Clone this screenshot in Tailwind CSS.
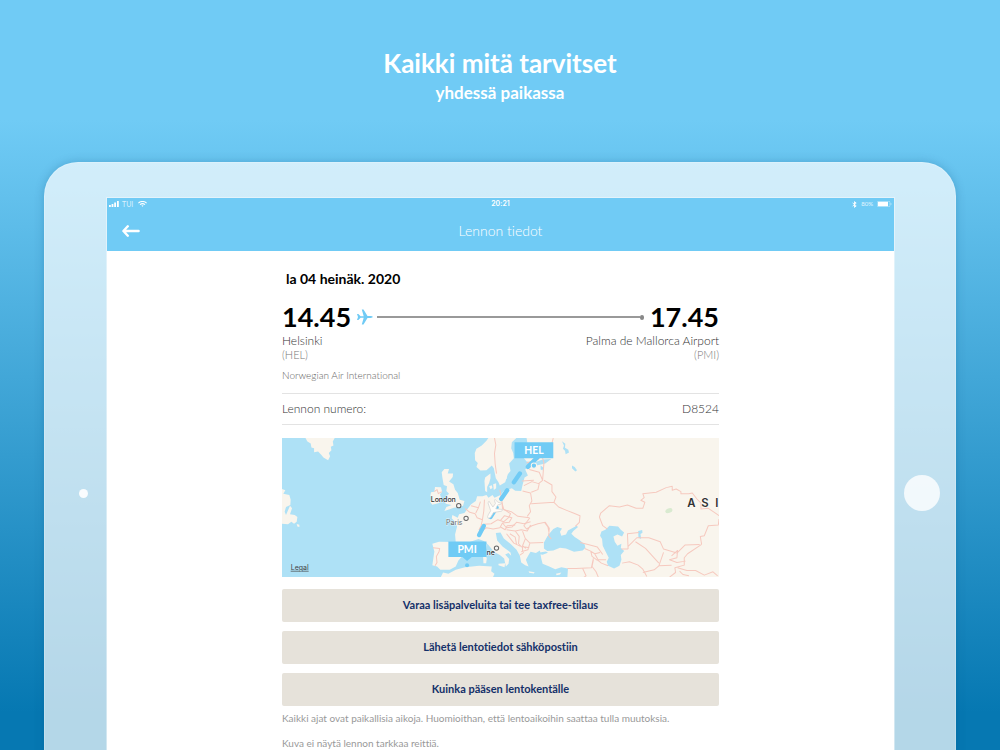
<!DOCTYPE html>
<html lang="fi">
<head>
<meta charset="utf-8">
<meta name="viewport" content="width=device-width, initial-scale=1">
<title>Lennon tiedot</title>
<script src="https://cdn.jsdelivr.net/npm/@tailwindcss/browser@4"></script>
</head>
<body class="font-['Lato','Noto_Sans',sans-serif] [font-variant-ligatures:none]">
<main class="flex h-screen flex-col overflow-hidden bg-linear-to-b/srgb from-[#70cbf5] from-16% to-[#0678b2] to-95%">
  <header class="flex h-[162px] shrink-0 flex-col items-center pt-[47px] font-bold text-white">
    <h1 class="text-[26px] leading-8">Kaikki mitä tarvitset</h1>
    <p class="text-[17px] leading-7">yhdessä paikassa</p>
  </header>

  <section class="mx-11 flex shrink-0 items-center rounded-[34px] border border-white/20 bg-white/70 py-[34px] shadow-[0_0_10px_rgba(0,70,120,0.25)]">
    <div class="flex w-[61px] shrink-0 justify-center pl-4"><span class="size-[9px] rounded-full bg-white/90"></span></div>

    <div class="min-h-[592px] min-w-0 grow border border-white/40 bg-white bg-clip-padding">
      <div class="bg-[#70cbf5] text-white">
        <div class="grid h-3 grid-cols-3 items-center px-[2px] text-[7px] leading-[10px]">
          <div class="flex items-center gap-[3px] text-white/75">
            <svg class="h-[6px] w-[10px]" viewBox="0 0 10 6" fill="#fff"><path d="M0 4h1.8v2H0zM2.6 3h1.8v3H2.6zM5.2 1.6H7V6H5.2zM8 0h1.8v6H8z"/></svg>
            <span>TUI</span>
            <svg class="ml-[2px] h-[6px] w-[9px]" viewBox="0 0 9 6" fill="none" stroke="#fff" stroke-width="1.1"><path d="M.4 2.1a6 6 0 0 1 8.2 0M2 3.7a3.7 3.7 0 0 1 5 0"/><path d="M3.5 4.8a1.5 1.5 0 0 1 2 0l-1 1z" fill="#fff" stroke="none"/></svg>
          </div>
          <span class="text-center font-['Inter',sans-serif] font-semibold">20:21</span>
          <div class="flex items-center justify-end gap-1 text-[6px] text-white/80">
            <svg class="h-[7px] w-[5px]" viewBox="0 0 5 7" fill="none" stroke="#fff" stroke-width=".9"><path d="M.6 1.9l3.6 3L2.5 6.4V.6l1.7 1.5-3.6 3"/></svg>
            <span>80%</span>
            <svg class="h-[6px] w-[15px]" viewBox="0 0 15 6"><rect x=".3" y=".3" width="12.6" height="5.4" rx="1" fill="none" stroke="#fff" stroke-opacity=".6" stroke-width=".6"/><rect x="1" y=".8" width="10" height="4.4" fill="#fff"/><path d="M13.6 2v2q1-.4 1-1t-1-1" fill="#fff" fill-opacity=".6"/></svg>
          </div>
        </div>
        <div class="grid h-[41px] grid-cols-[40px_1fr_40px] items-center px-3">
          <button type="button" aria-label="Takaisin" class="flex pl-[3px]">
            <svg class="h-3 w-[18px]" viewBox="0 0 18 12" fill="none" stroke="#fff" stroke-width="2.4" stroke-linecap="round" stroke-linejoin="round"><path d="M16.6 6H1.6M5.8 1.3L1.4 6l4.4 4.7"/></svg>
          </button>
          <h2 class="text-center text-[14px] leading-5 font-light">Lennon tiedot</h2>
        </div>
      </div>

      <div class="mx-auto max-w-[437px] pt-[18px] text-[12px] font-light text-[#333]">
        <p class="pl-1 text-[14px] leading-5 font-bold text-black">la 04 heinäk. 2020</p>
        <div class="mt-3 flex items-center text-[27px] leading-8 font-bold text-black">
          <span>14.45</span>
          <svg class="mr-1 ml-[6px] h-4 w-4 shrink-0" viewBox="0 0 16 16" fill="#70cbf5"><path d="M0 4.9h1.4l2.2 2.3h3.1L4.8.4h1.7l4 6.7h3.1q2.2.2 2.2.9t-2.2.9h-3.1l-4 6.7H4.8l1.9-6.8H3.6l-2.2 2.3H0L1 8z"/></svg>
          <span class="h-[2px] grow bg-[#999]"></span>
          <span class="mr-[6px] h-[5px] w-1 rounded-full bg-[#888]"></span>
          <span>17.45</span>
        </div>
        <div class="mt-px flex justify-between leading-[14px]">
          <p>Helsinki<br><span class="text-[11px] text-[#777]">(HEL)</span></p>
          <p class="text-right">Palma de Mallorca Airport<br><span class="text-[11px] text-[#777]">(PMI)</span></p>
        </div>
        <p class="mt-[3px] text-[10px] leading-5 text-[#666]">Norwegian Air International</p>
        <div class="mt-2 flex h-8 items-center justify-between border-y border-[#e3e3e3]">
          <span>Lennon numero:</span><span>D8524</span>
        </div>

        <svg class="mt-[13px] block h-[139px] w-full" viewBox="0 5 1308 417" preserveAspectRatio="xMidYMid slice" role="img" aria-label="Reittikartta HEL – PMI">
          <rect y="5" width="1308" height="420" fill="#aee1f6"/>
          <g fill="#f9f5ed">
            <path d="M70 5L76 16 86 22 88 34 96 36 96 48 108 46 118 56 124 64 138 72 144 60 140 50 148 42 146 32 154 28 152 16 158 5z"/>
            <path d="M0 158L10 162 4 172 22 176 26 190 25 206 12 212 8 226 12 236 24 208 30 216 24 234 38 236 46 242 44 256 36 262 28 256 18 264 0 262zM44 263l8 2 0 7-6-2z"/>
            <path d="M458 152L476 153 479 166 473 174 477 188 470 200 450 205 443 196 450 186 444 178 446 168 456 166z"/>
            <path d="M486 98L500 98 496 112 512 112 511 122 500 136 513 144 518 160 526 170 532 190 546 194 542 208 530 213 514 214 502 219 486 224 492 212 508 206 490 202 488 194 498 188 494 178 500 172 492 164 494 150 484 146 480 124 478 108z"/>
            <path d="M577 50L582 38 598 28 612 14 618 5 702 5 688 18 686 36 692 50 694 66 680 82 684 104 676 114 668 138 652 148 648 138 640 126 634 96 628 88 612 102 594 103 582 92 586 80 578 72z"/>
            <path d="M606 134L608 124 624 112 624 126 620 140 614 152 614 168 608 164zM620 150l8-3 2 8-6 4zM632 144l9-3 0 15-7 5zM668 125l4-7 1 10z"/>
            <path d="M732 5L734 18 722 28 726 42 720 60 732 76 756 78 780 70 806 68 788 82 762 88 740 88 728 100 736 118 726 124 720 146 716 164 698 163 688 156 664 164 654 176 636 184 630 176 618 184 612 176 600 180 584 180 580 194 566 204 552 222 546 230 530 234 526 244 510 236 508 246 518 256 524 270 518 294 520 317 470 316 450 322 456 345 450 386 464 390 474 400 502 400 520 390 528 372 546 352 552 330 564 316 588 308 604 314 618 326 634 346 652 356 665 366 670 390 678 382 680 368 668 354 678 350 686 358 684 348 660 330 644 312 640 290 654 288 664 306 686 324 702 340 712 358 716 378 728 386 738 390 730 370 738 356 744 346 760 350 772 342 776 366 780 382 800 390 818 398 836 392 856 396 854 425 1308 425 1308 5z"/>
            <path d="M648 382l20-2-2 12-18-6zM602 362l8-4 3 8-2 14-8 0zM605 328l5-8 4 6-3 14-5-2zM474 425L482 408 498 412 520 400 548 392 590 388 628 390 626 404 636 412 630 425zM738 404l18 3-2 4-14-2zM820 412l16-4-4 6-10 2z"/>
          </g>
          <g fill="#aee1f6">
            <path d="M784 318L794 300 802 290 812 278 824 272 838 276 832 286 836 298 850 294 856 282 882 268 886 272 872 284 866 292 876 302 892 312 906 324 908 334 900 342 874 346 850 336 832 334 812 342 794 344 784 336z"/>
            <path d="M956 285L968 280 980 268 1006 270 1014 280 1024 288 1018 300 1004 294 992 300 996 316 1004 328 1016 322 1014 334 1024 344 1014 356 1016 370 1010 388 994 396 976 388 972 376 978 364 970 348 960 328 958 308 952 298z"/>
            <path d="M838 15l10 8-1 12 10 6 2 8-10 5-2-10-6-6 3-10zM868 88l8 4 7 10-5 4-10-10zM1066 284l12-3 1 8-6 4 2 15-8-4zM774 88l8 6-2 8-6-2zM766 349l24-4 6 4-16 6-12-2z"/>
          </g>
          <ellipse cx="1158" cy="223" rx="11" ry="7" fill="#d9ead0" transform="rotate(-20 1158 223)"/>
          <g fill="none" stroke="#f6c9bf" stroke-width="3" stroke-linejoin="round">
            <path d="M636 5L640 26 636 52 638 82 642 112M456 166l8-6 4 12 10-6M452 334l20 2-2 10-8 14 2 18-6 10M528 322l34 6M548 216l14 12 16 4 6 12 16 6M566 208l22 6 6-18M588 214l-8 16M600 250l4-26 2-34M600 250l-4 18-6 12 8 6M604 264l22-2 20-12 18 6 14-12 6-12-24-16-2-24-6-32"/>
            <path d="M596 286l16-12 20 4 20-4 8-14 20-2 8-14-22-6-12 14M660 260l12 14 16-2 14-14 22 4 20-6M658 198l6 22 22 6 20 14 34 4M720 164l24 6 4 24-8 14 4 18-10 14M724 148l24-12 20 6 12-10-10-24-30-8M718 134l36-2M770 142l-4 18-20 8M780 132l4-52-4-14M784 132l24 14 0 20 12 16-6 16-68 4M732 80l34-10 40-42 6-22M814 198l14 14 24 10 20 8 20 8-2 20-12 12"/>
            <path d="M672 280l26 4 18-4 18 4 10-18M672 292l22 28 20 10M682 292l16 10 4 22M698 284l12 16-2 22 12 12M720 284l8 22 14 14 40-2M728 308l-8 20 10 8M742 320l-6 20-20 6M742 244l-18 24 8 10 16-10 18-6 22-4 12 18-2 22 8 10M786 258l10 14 4 20M654 272l14 8 6-12 24-2M720 344l0-14 20 4M712 356l12-8"/>
            <path d="M892 318l24 6 28 8 16 22M906 336l18 8 12 8 16-4M924 344l4 16 16 12M936 352l10 18 24 0M854 396l26 0 46-2 6-28M932 370l-4 20 12 16 8 19M900 396l10 22-10 7M976 388l-20-8-12-10"/>
            <path d="M974 278L960 268 950 242 954 230 980 208 1010 212 1034 206 1060 216 1080 216 1086 198 1074 192 1084 184 1080 172 1120 168 1150 154 1168 150 1168 162 1180 158 1194 166 1194 172 1218 172 1228 170 1242 188 1254 200 1254 218 1276 216 1294 228 1308 238M1308 248l-2 18-30 2-12 30-12 2 4 24M1036 338l-2-46 34-4M1036 338l-20 0M1036 330l26-26 36 0 34 12 10 22 40 12 24-24 44-2M1058 316l30 20 40 44M1018 380l22-4 26 10 14 12 12 22M1080 408l34-8 14-12 38-2M1142 348l-14 40M1166 358l18-16-2 22-22 6 22 8 26-4M1256 324l-42 28-10 12 0 22-28 8 2 14-18 14M1184 394l28 8 26 0 26 14 26-10 14 12M1190 404l10 10 18 4"/>
          </g>
          <g fill="none" stroke="#70cbf5" stroke-width="13" stroke-linecap="round">
            <path d="M764 64L736 92M712 112L694 138M674 162L656 188M642 214L624 242M604 269L590 296"/>
          </g>
          <circle cx="754" cy="88" r="8" fill="#70cbf5" stroke="#f9f5ed" stroke-width="3"/>
          <path d="M0-31q5 1 5 9v14L24 8v6L5 5 4 18l7 6v4L0 25l-11 3v-4l7-6-1-13-19 9V8L-5-8v-14q0-8 5-9z" transform="translate(633 219) rotate(211)" fill="#fffdf9" stroke="#d4d4d4" stroke-width="2"/>
          <g fill="#f8f8f6" stroke="#666" stroke-width="3"><circle cx="529" cy="208" r="6.5"/><circle cx="551" cy="246" r="6.5"/><circle cx="642" cy="335" r="6.5"/></g>
          <g font-family="Inter, sans-serif" font-size="21" fill="#333" stroke="#fff" stroke-width="3" stroke-opacity=".7" paint-order="stroke">
            <text x="445" y="198" font-weight="500">London</text>
            <text x="491" y="265" font-weight="400" fill="#666">Paris</text>
            <text x="612" y="356" font-weight="500">ne</text>
            <text x="1213" y="211" font-size="34" font-weight="600">A</text>
            <text x="1255" y="211" font-size="34" font-weight="600">S</text>
            <text x="1297" y="211" font-size="34" font-weight="600">I</text>
            <text x="26" y="400" font-weight="400" fill="#444" stroke="none" text-decoration="underline">Legal</text>
          </g>
          <path fill="#70cbf5" d="M696 18h116v48H696zM498 315h114v47h-44l-14 12-14-12h-42z"/>
          <circle cx="554" cy="386" r="6" fill="#70cbf5"/>
          <g fill="#fff" font-size="31" font-weight="700" text-anchor="middle"><text x="754" y="54">HEL</text><text x="554" y="351">PMI</text></g>
        </svg>

        <div class="mt-3 flex flex-col gap-[9px] text-[11px] text-[#143069]">
          <button type="button" class="h-[33px] rounded-[2px] bg-[#e6e2da] font-bold">Varaa lisäpalveluita tai tee taxfree-tilaus</button>
          <button type="button" class="h-[33px] rounded-[2px] bg-[#e6e2da] font-bold">Lähetä lentotiedot sähköpostiin</button>
          <button type="button" class="h-[33px] rounded-[2px] bg-[#e6e2da] font-bold">Kuinka pääsen lentokentälle</button>
        </div>
        <p class="mt-[2px] text-[10px] leading-5 font-normal text-[#999]">Kaikki ajat ovat paikallisia aikoja. Huomioithan, että lentoaikoihin saattaa tulla muutoksia.</p>
        <p class="mt-[5px] text-[10px] leading-5 font-normal text-[#999]">Kuva ei näytä lennon tarkkaa reittiä.</p>
      </div>
    </div>

    <div class="flex w-[60px] shrink-0 justify-center pr-[6px]"><button type="button" aria-label="Koti" class="size-9 rounded-full bg-white/80"></button></div>
  </section>
</main>
</body>
</html>
